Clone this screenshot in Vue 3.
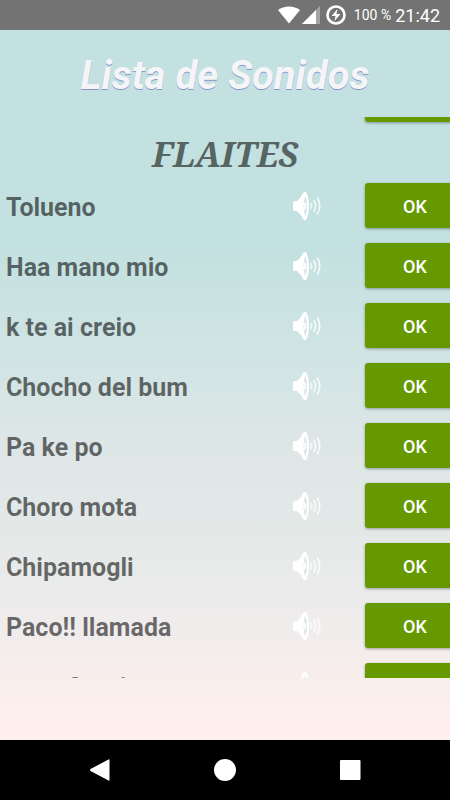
<script setup>
const sounds = [
  'Tolueno',
  'Haa mano mio',
  'k te ai creio',
  'Chocho del bum',
  'Pa ke po',
  'Choro mota',
  'Chipamogli',
  'Paco!! llamada',
  'papa Sonrie',
]
</script>

<template>
  <div class="screen">
    <header class="status">
      <svg class="wifi" viewBox="0 0 22 18" aria-hidden="true">
        <path d="M0 4C6-.8 16-.8 22 4L11 17.500Z" fill="#fff" />
      </svg>
      <svg class="signal" viewBox="0 0 18 18" aria-hidden="true">
        <path d="M18 0V18H0Z" fill="#a3a3a3" />
        <path d="M14 4V18H0Z" fill="#fff" />
      </svg>
      <svg class="charge" viewBox="0 0 20 20" aria-hidden="true">
        <circle cx="10" cy="10" r="8.500" fill="none" stroke="#fff" stroke-width="2.600" />
        <path d="M11.500 4 5.500 11H9.500L8.500 16 14.500 9H10.500Z" fill="#fff" />
      </svg>
      <span class="battery">100 %</span>
      <span class="clock">21:42</span>
    </header>

    <main class="content">
      <h1 class="title">Lista de Sonidos</h1>
      <div class="viewport">
        <div class="list">
          <div class="row">
            <span class="name"></span>
            <button class="ok" type="button" aria-label="OK"></button>
          </div>
          <h2 class="group">FLAITES</h2>
          <div v-for="sound in sounds" :key="sound" class="row">
            <span class="name">{{ sound }}</span>
            <svg class="speaker" viewBox="0 0 30 30" aria-hidden="true">
              <path d="M1 11.500Q1 10 3 10H5Q9 7 11 2Q12 .5 14 1Q17 6 17 15T14 29Q12 29.500 11 28Q9 23 5 20H3Q1 20 1 18.500Z" fill="#fff" />
              <path d="M13.200 4.500Q15.200 9 15.200 15T13.200 25.500Q11.600 21 11.600 15T13.200 4.500Z" class="cone" />
              <path d="M12.300 11Q14.500 12 14.500 15T12.300 19Z" fill="#fff" />
              <path d="M19 12.500Q20.500 15 19 17.500M22 9.500Q25 15 22 20.500" class="wave" />
              <path d="M25.500 7Q30 15 25.500 23" class="wave" />
            </svg>
            <button class="ok" type="button">OK</button>
          </div>
        </div>
      </div>
    </main>

    <nav class="navbar">
      <button type="button" aria-label="Back">
        <svg viewBox="0 0 24 24"><path d="M21.500 2V22Q21.500 23 20.500 22.500L2.500 13Q1.500 12 2.500 11L20.500 1.500Q21.500 1 21.500 2Z" fill="#fff" /></svg>
      </button>
      <button type="button" aria-label="Home">
        <svg viewBox="0 0 24 24"><circle cx="12" cy="12" r="11" fill="#fff" /></svg>
      </button>
      <button type="button" aria-label="Recent apps">
        <svg viewBox="0 0 24 24"><rect x="2" y="2" width="20.500" height="20" rx="1" fill="#fff" /></svg>
      </button>
    </nav>
  </div>
</template>

<style>
body {
  margin: 0;
}
</style>

<style scoped>
.screen {
  display: flex;
  flex-direction: column;
  height: 100vh;
  overflow: hidden;
  font-family: Roboto, "Liberation Sans", sans-serif;
}
.status {
  display: flex;
  align-items: center;
  justify-content: flex-end;
  height: 30px;
  padding-right: 10px;
  background: #737373;
  color: #fff;
  flex: none;
}
.wifi {
  width: 22px;
  height: 18px;
  margin-right: 2px;
}
.signal {
  width: 18px;
  height: 18px;
  margin-right: 6px;
}
.charge {
  width: 20px;
  height: 20px;
  margin-right: 8px;
}
.battery {
  margin-right: 4px;
  font-size: 14px;
}
.clock {
  font-size: 18px;
}
.content {
  display: flex;
  flex-direction: column;
  flex: 1;
  min-height: 0;
  padding-bottom: 62px;
  background: linear-gradient(#c3e1e0 31%, #d0e4e4 45%, #dde6e6 58%, #e4e9e8 71%, #ebebeb 79%, #f3eded 87%, #f9eeeb 92%, #fff0ee 98%);
}
.title {
  flex: none;
  margin: 0;
  height: 87px;
  line-height: 92px;
  text-align: center;
  font-size: 40px;
  font-weight: 700;
  font-style: italic;
  color: #f5f5f7;
  text-shadow: 0 1px 0 #8794cf;
}
.viewport {
  flex: 1;
  min-height: 0;
  overflow: hidden;
}
.list {
  margin-top: -46px;
}
.group {
  margin: 0;
  height: 46px;
  line-height: 46px;
  text-align: center;
  font-family: "Noto Serif", "Liberation Serif", serif;
  font-size: 34px;
  font-weight: 700;
  font-style: italic;
  color: #566462;
}
.row {
  display: flex;
  align-items: center;
  height: 60px;
  padding-left: 6px;
}
.name {
  flex: 1;
  font-size: 25px;
  font-weight: 700;
  color: rgba(0, 0, 0, 0.56);
}
.speaker {
  width: 30px;
  height: 30px;
  margin: 0 43px 3px 0;
}
.cone {
  fill: #b9d0d0;
  fill-opacity: 0.5;
}
.wave {
  fill: none;
  stroke: #fff;
  stroke-opacity: 0.8;
  stroke-width: 1.600;
  stroke-linecap: round;
}
.ok {
  flex: none;
  width: 100px;
  height: 45px;
  margin: 0 -15px 3px 0;
  padding: 2px 0 0;
  border: 0;
  border-radius: 3px;
  background: #669900;
  box-shadow: 0 1px 3px rgba(0, 0, 0, 0.35);
  color: #fff;
  font-family: inherit;
  font-size: 18px;
  font-weight: 500;
}
.navbar {
  display: flex;
  align-items: center;
  justify-content: center;
  gap: 101px;
  height: 60px;
  flex: none;
  background: #000;
}
.navbar button {
  width: 24px;
  height: 24px;
  padding: 0;
  border: 0;
  background: none;
}
.navbar svg {
  display: block;
}
</style>
